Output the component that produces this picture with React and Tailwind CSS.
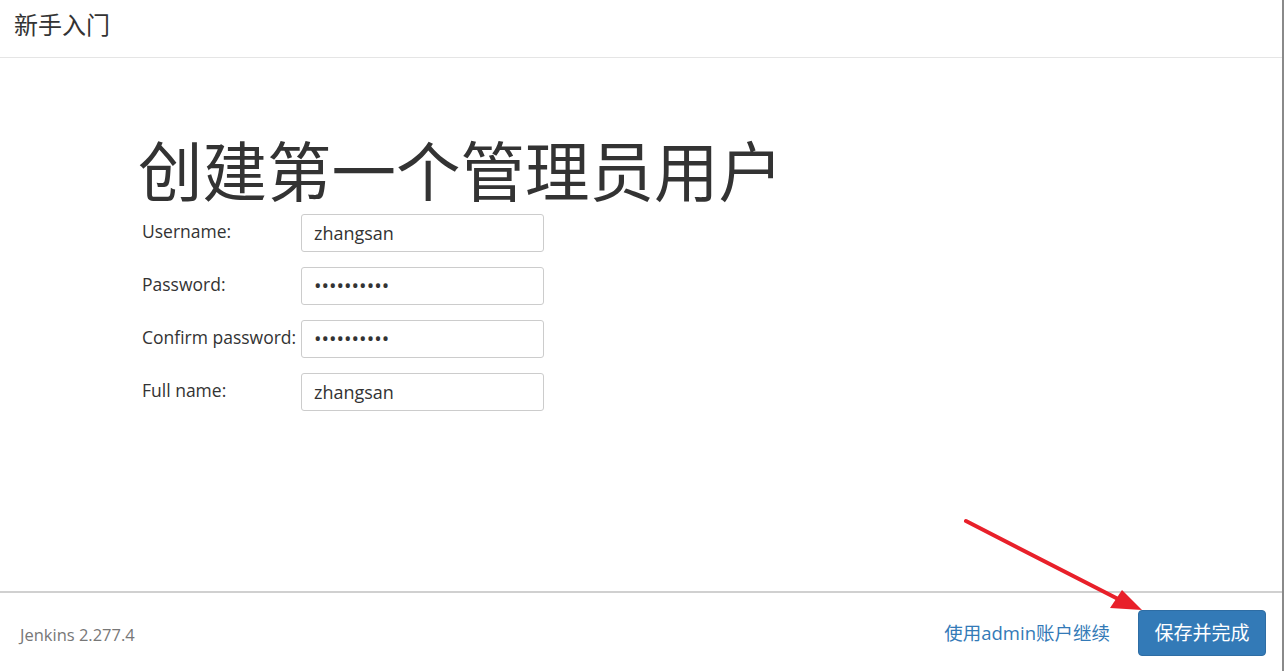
const fields = [
  { label: "Username:", value: "zhangsan", type: "text" },
  { label: "Password:", value: "••••••••••", type: "password" },
  { label: "Confirm password:", value: "••••••••••", type: "password" },
  { label: "Full name:", value: "zhangsan", type: "text" },
];

const font = { fontFamily: '"Open Sans", "Noto Sans CJK SC", sans-serif' };

export default function App() {
  return (
    <div className="relative w-[1286px] h-[671px] bg-white overflow-hidden" style={font}>
      <div className="w-[1284px] h-full flex flex-col border-r-2 border-[#8a8a8a] text-[#333]">
        <div className="h-[58px] flex items-center px-[14px] border-b border-[#e5e5e5] shrink-0">
          <span className="text-[24px] leading-none mt-[-8px]">新手入门</span>
        </div>

        <div className="flex-1 pl-[138px] pt-[73px]">
          <h1 className="text-[64.5px] leading-[80px] font-normal">创建第一个管理员用户</h1>
          <div className="flex flex-col gap-[15px] mt-[3px]">
            {fields.map((f) => (
              <div key={f.label} className="flex items-start">
                <div className="w-[163px] pl-[4px] pt-[4px] text-[17.5px] whitespace-nowrap">{f.label}</div>
                <div className="w-[243px] h-[38px] border border-[#ccc] rounded-[3px] flex items-center px-[12px] text-[18px]">
                  {f.type === "password" ? (
                    <span className="text-[20px] tracking-[0px] leading-none">{f.value}</span>
                  ) : (
                    <span>{f.value}</span>
                  )}
                </div>
              </div>
            ))}
          </div>
        </div>

        <div className="h-[80px] border-t-2 border-[#d0d0d0] flex items-center justify-between pl-[20px] pr-[16px] shrink-0">
          <span className="text-[16.5px] text-[#777] mt-[6px]">Jenkins 2.277.4</span>
          <div className="flex items-center gap-[28px] mt-[2px]">
            <a className="text-[18.5px] text-[#337ab7]">使用admin账户继续</a>
            <button className="bg-[#337ab7] text-white text-[19px] rounded-[4px] w-[128px] h-[46px] border border-[#2e6da4]">
              保存并完成
            </button>
          </div>
        </div>
      </div>

      <svg className="absolute left-0 top-0 pointer-events-none" width="1286" height="671">
        <line x1="966" y1="521" x2="1122" y2="601" stroke="#e8202a" strokeWidth="4" strokeLinecap="round" />
        <polygon points="1142,610 1110,608 1122,590" fill="#e8202a" />
      </svg>
    </div>
  );
}
